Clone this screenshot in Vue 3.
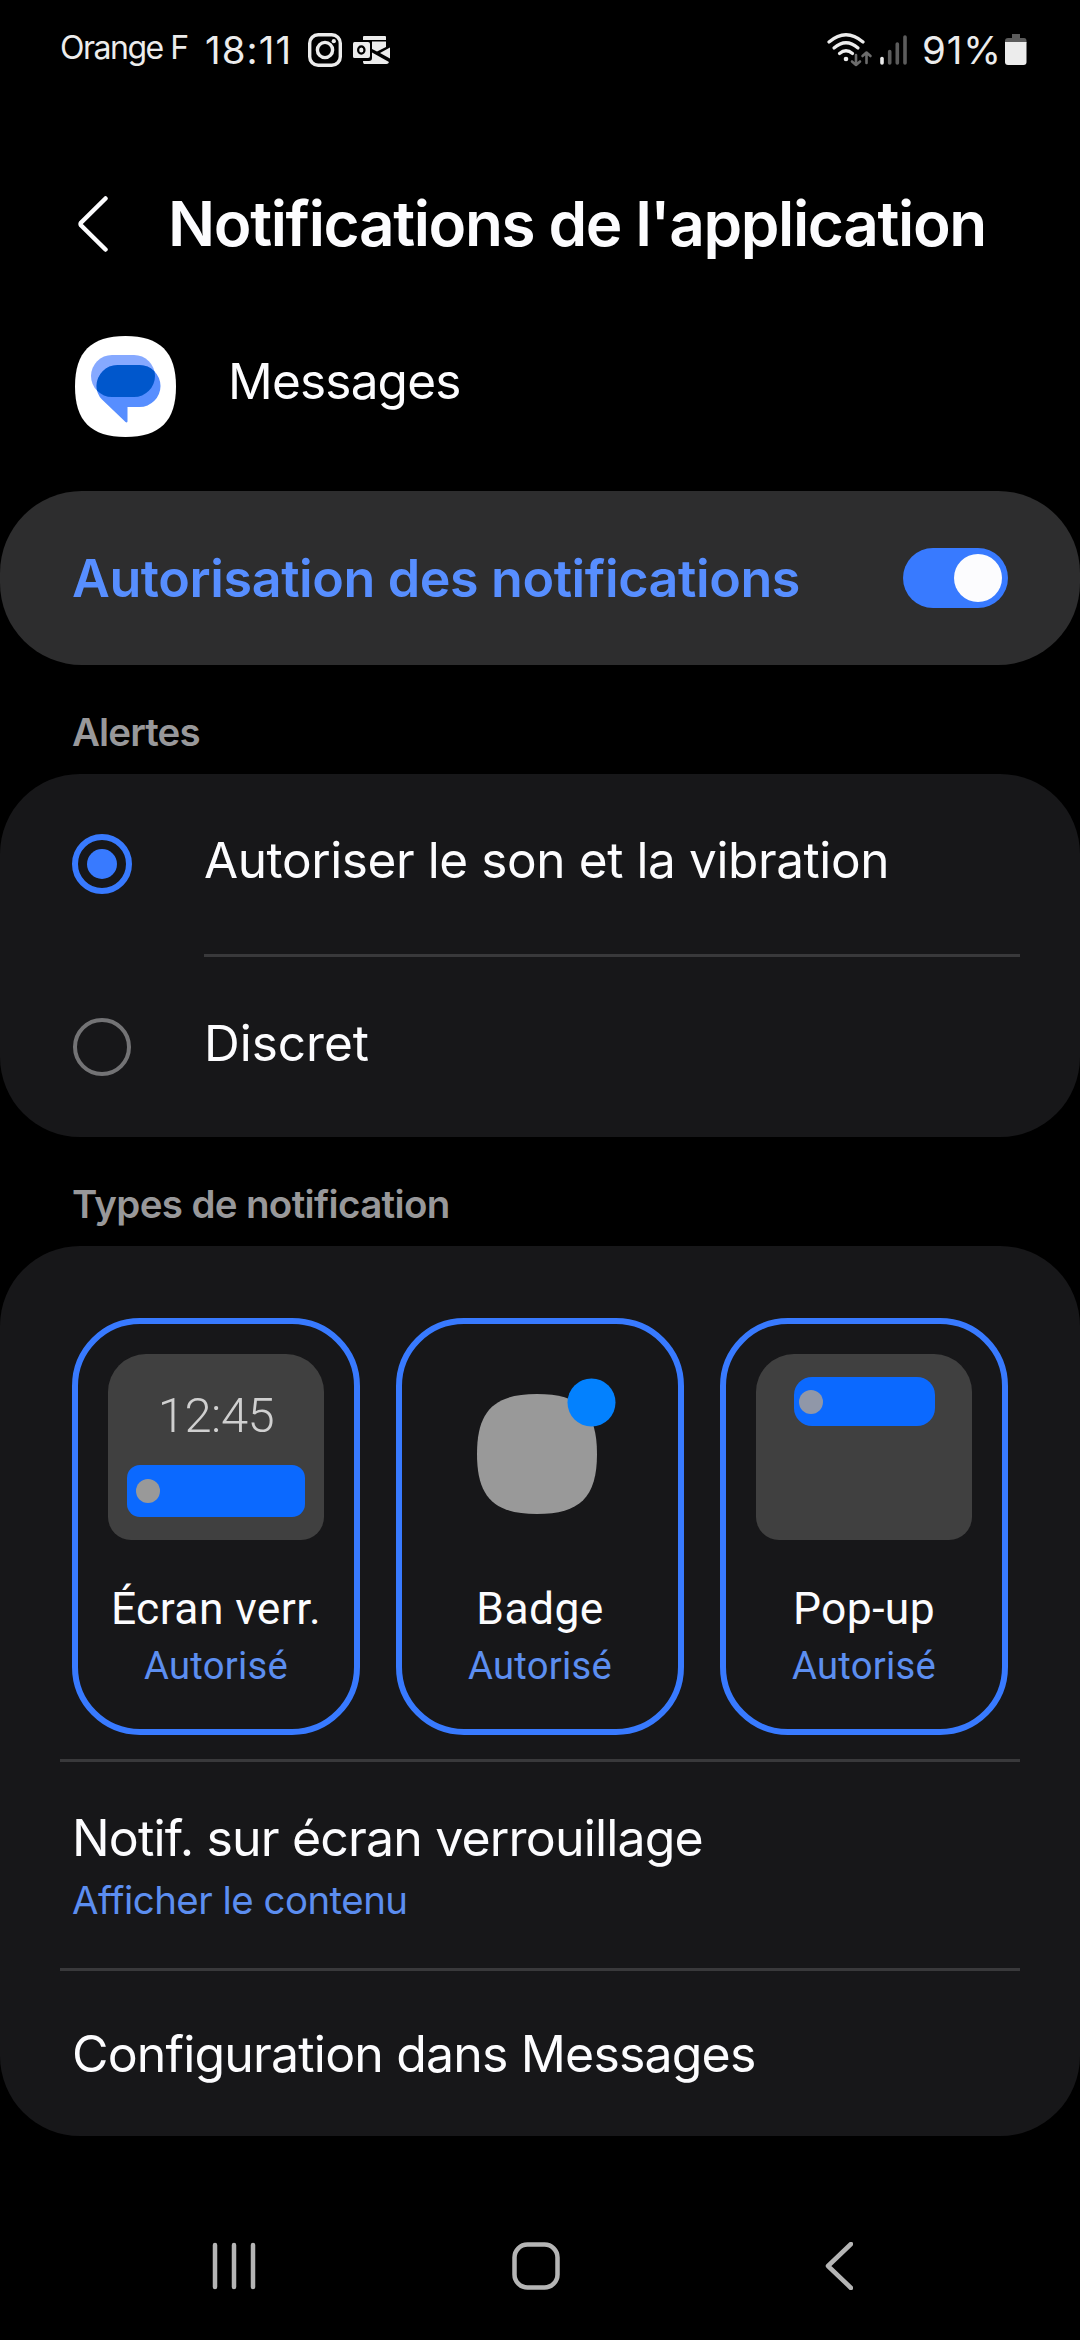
<script setup>
import { ref } from 'vue'

const enabled = ref(true)
const alertMode = ref('sound')

const alertModes = [
  { id: 'sound', label: 'Autoriser le son et la vibration' },
  { id: 'silent', label: 'Discret' }
]

const types = [
  { id: 'lock', label: 'Écran verr.', state: 'Autorisé' },
  { id: 'badge', label: 'Badge', state: 'Autorisé' },
  { id: 'popup', label: 'Pop-up', state: 'Autorisé' }
]
</script>

<template>
  <div class="screen">
    <header class="status-bar">
      <span class="carrier">Orange F</span>
      <span class="clock">18:11</span>
      <svg class="instagram" viewBox="0 0 34 34" aria-hidden="true">
        <rect x="1.7" y="1.7" width="30.6" height="30.6" rx="8.5" />
        <circle cx="17" cy="17" r="7.6" />
        <circle class="fill" cx="25.8" cy="8.2" r="2.1" />
      </svg>
      <svg class="outlook" viewBox="0 0 38 28" aria-hidden="true">
        <path d="M11 0H32Q33 0 33 1V4H10V1Q10 0 11 0Z" />
        <path d="M19 5.500H33V11L24 15.500L19 13Z" />
        <path d="M37 11.500V22.500L27 17Z" />
        <path d="M19 16.500L36 26Q35.500 28 33.500 28H11Q10 28 10 25H16Q19 25 19 22Z" />
        <path d="M1.500 6H15Q17 6 17 8V20Q17 22 15 22H1.500Q0 22 0 20.500V7.500Q0 6 1.500 6Z" />
        <ellipse class="ring" cx="8.3" cy="14" rx="3.200" ry="3.700" />
      </svg>
      <svg class="wifi" viewBox="0 0 46 34" aria-hidden="true">
        <path d="M2 9Q19 -5.500 36 9" />
        <path d="M7 15Q19 4.500 31 15" />
        <path d="M12.500 20.500Q19 15 25.500 20.500" />
        <circle cx="19" cy="26" r="2.300" />
        <path class="dim" d="M29 22V32M25 28.500L29 32L33 28.500M39.500 30V19.500M35.500 23L39.500 19.500L43.500 23" />
      </svg>
      <svg class="signal" viewBox="0 0 28 30" aria-hidden="true">
        <path class="on" d="M2 23.500V28" />
        <path d="M9.700 16.500V28M17.300 9V28M25 2V28" />
      </svg>
      <span class="percent">91%</span>
      <svg class="battery" viewBox="0 0 22 32" aria-hidden="true">
        <path class="cap" d="M7 0H15V4H19Q21.500 4 21.500 7V9H0V7Q0 4 3 4H7Z" />
        <path d="M0 8H21.500V28Q21.500 31 18.500 31H3Q0 31 0 28Z" />
      </svg>
    </header>

    <div class="title-bar">
      <svg class="back" viewBox="0 0 30 56" aria-hidden="true">
        <path d="M27.500 2.500L3.200 26.500Q2 28 3.200 29.500L27.500 53.500" />
      </svg>
      <h1>Notifications de l'application</h1>
    </div>

    <div class="app-row">
      <svg class="app-icon" viewBox="0 0 101 101" aria-hidden="true">
        <defs>
          <clipPath id="rear">
            <rect x="16" y="19" width="64" height="42" rx="21" />
          </clipPath>
        </defs>
        <path class="plate" d="M50.500 0C85 0 101 16 101 50.500S85 101 50.500 101S0 85 0 50.500S16 0 50.500 0Z" />
        <rect class="rear" x="16" y="19" width="64" height="42" rx="21" />
        <path class="front" d="M42.500 29H64.500A21 21 0 0 1 64.500 71H52.500V85.500Q52 87 50.500 86L27 63.500Q21.500 58 21.500 50A21 21 0 0 1 42.500 29Z" />
        <path class="overlap" clip-path="url(#rear)" d="M42.500 29H64.500A21 21 0 0 1 64.500 71H52.500V85.500Q52 87 50.500 86L27 63.500Q21.500 58 21.500 50A21 21 0 0 1 42.500 29Z" />
      </svg>
      <span class="app-name">Messages</span>
    </div>

    <button class="permission" role="switch" :aria-checked="enabled" @click="enabled = !enabled">
      <span class="permission-label">Autorisation des notifications</span>
      <span class="toggle" :class="{ on: enabled }"><i></i></span>
    </button>

    <h2 class="alerts-heading">Alertes</h2>
    <section class="card" role="radiogroup">
      <div
        v-for="mode in alertModes"
        :key="mode.id"
        class="alert-row"
        role="radio"
        :aria-checked="alertMode === mode.id"
        @click="alertMode = mode.id"
      >
        <span class="radio" :class="{ checked: alertMode === mode.id }"></span>
        <span class="alert-label" :class="mode.id">{{ mode.label }}</span>
      </div>
    </section>

    <h2 class="types-heading">Types de notification</h2>
    <section class="card">
      <div class="tiles">
        <div v-for="type in types" :key="type.id" class="tile">
          <div class="preview" :class="type.id">
            <span v-if="type.id === 'lock'" class="preview-clock">12:45</span>
            <svg v-if="type.id === 'badge'" viewBox="0 0 144 138" aria-hidden="true">
              <path d="M63 17C106 17 123 34 123 77S106 137 63 137S3 120 3 77S20 17 63 17Z" />
              <circle cx="117.500" cy="25.500" r="24" />
            </svg>
            <span v-else class="banner"><i></i></span>
          </div>
          <span class="tile-label">{{ type.label }}</span>
          <span class="tile-state">{{ type.state }}</span>
        </div>
      </div>
      <div class="link-row two-lines">
        <span class="link-title">Notif. sur écran verrouillage</span>
        <span class="link-sub">Afficher le contenu</span>
      </div>
      <div class="link-row">
        <span class="link-title">Configuration dans Messages</span>
      </div>
    </section>

    <nav class="nav-bar">
      <svg class="recents" viewBox="0 0 44 48" aria-hidden="true">
        <path d="M3 3V45M22 3V45M41 3V45" />
      </svg>
      <svg class="home" viewBox="0 0 48 48" aria-hidden="true">
        <rect x="2.500" y="2.500" width="43" height="43" rx="13" />
      </svg>
      <svg class="nav-back" viewBox="0 0 28 48" aria-hidden="true">
        <path d="M26 2L3 24L26 46" />
      </svg>
    </nav>
  </div>
</template>

<style>
body {
  background: #000;
}
</style>

<style scoped>
.screen {
  width: 1080px;
  height: 2340px;
  display: flex;
  flex-direction: column;
  color: #fcfcfe;
  background: #000;
  font-family: Inter, Roboto, sans-serif;
  overflow: hidden;
}

svg {
  display: block;
  flex: none;
  fill: none;
  stroke-linecap: round;
  stroke-linejoin: round;
}

h1,
h2 {
  margin: 0;
  font-weight: 600;
  white-space: nowrap;
}

.status-bar {
  height: 100px;
  padding: 0 53px 0 60px;
  display: flex;
  align-items: center;
  color: #ececec;
  font-size: 38.4px;
  line-height: 100px;
  white-space: nowrap;
}

.carrier {
  width: 145px;
  align-self: flex-start;
  font-size: 32px;
  line-height: 95px;
  letter-spacing: -1.5px;
}

.clock {
  width: 103px;
  letter-spacing: 1.1px;
}

.instagram {
  width: 34px;
  height: 34px;
  stroke: #ececec;
  stroke-width: 3.4;
}

.instagram .fill {
  fill: #ececec;
  stroke: none;
}

.outlook {
  width: 38px;
  height: 28px;
  margin-left: 11px;
  fill: #ececec;
}

.outlook .ring {
  fill: none;
  stroke: #000;
  stroke-width: 2.2;
}

.wifi {
  width: 46px;
  height: 34px;
  margin-left: auto;
  stroke: #ececec;
  stroke-width: 3.2;
}

.wifi circle {
  fill: #ececec;
  stroke: none;
}

.wifi .dim {
  stroke: #6c6c6c;
  stroke-width: 2.6;
}

.signal {
  width: 28px;
  height: 30px;
  margin-left: 7px;
  stroke: #5c5c5c;
  stroke-width: 3.6;
}

.signal .on {
  stroke: #ececec;
}

.percent {
  width: 83px;
  margin-left: 14px;
  letter-spacing: 0.9px;
}

.battery {
  width: 22px;
  height: 32px;
  fill: #ececec;
}

.battery .cap {
  fill: #5c5c5c;
}

.title-bar {
  height: 236px;
  padding: 12px 0 0 78px;
  display: flex;
  align-items: center;
  box-sizing: border-box;
}

.back {
  width: 30px;
  height: 56px;
  stroke: #fcfcfe;
  stroke-width: 4.5;
}

.title-bar h1 {
  margin-left: 60px;
  font-size: 62px;
  line-height: 80px;
  letter-spacing: -1.35px;
}

.app-row {
  height: 101px;
  padding: 0 75px;
  display: flex;
  align-items: center;
}

.app-icon {
  width: 101px;
  height: 101px;
}

.plate {
  fill: #fff;
}

.rear {
  fill: #86a9ff;
}

.front {
  fill: #578eff;
}

.overlap {
  fill: #0057cc;
}

.app-name {
  margin-left: 52px;
  padding-bottom: 11px;
  font-size: 49.5px;
  line-height: 60px;
  letter-spacing: -0.8px;
}

.permission {
  height: 174px;
  margin: 54px 0 0;
  padding: 0 72px;
  display: flex;
  align-items: center;
  justify-content: space-between;
  border: 0;
  border-radius: 82px;
  color: #578eff;
  background: #2d2d2e;
  font-family: inherit;
  font-size: 52px;
  font-weight: 600;
  line-height: 64px;
  letter-spacing: -0.4px;
  text-align: left;
  white-space: nowrap;
}

.permission-label {
  padding-top: 2px;
}

.toggle {
  width: 105px;
  height: 60px;
  padding: 6px;
  display: flex;
  align-items: center;
  box-sizing: border-box;
  border-radius: 30px;
  background: #5a5a5c;
}

.toggle.on {
  justify-content: flex-end;
  background: #387aff;
}

.toggle i {
  width: 48px;
  height: 48px;
  border-radius: 50%;
  background: #fcfcfe;
}

h2 {
  padding-left: 72px;
  color: #98989a;
  font-size: 38.5px;
  line-height: 50px;
}

.alerts-heading {
  margin: 42px 0 17px;
  letter-spacing: -0.9px;
}

.types-heading {
  margin: 42px 0 17px;
  letter-spacing: -0.65px;
}

.card {
  flex: none;
  border-radius: 80px;
  background: #171719;
}

.alert-row {
  position: relative;
  height: 180px;
  padding-left: 72px;
  display: grid;
  grid-template-columns: 132px 1fr;
  align-items: center;
}

.alert-row + .alert-row {
  margin-top: 3px;
}

.alert-row + .alert-row::before {
  content: "";
  position: absolute;
  top: -3px;
  left: 204px;
  right: 60px;
  height: 3px;
  background: #39393b;
}

.radio {
  width: 58px;
  height: 58px;
  margin-left: 1px;
  display: grid;
  place-items: center;
  box-sizing: border-box;
  border: 4px solid #737375;
  border-radius: 50%;
}

.radio.checked {
  width: 60px;
  height: 60px;
  margin-left: 0;
  border: 6px solid #387aff;
}

.radio.checked::after {
  content: "";
  width: 30px;
  height: 30px;
  border-radius: 50%;
  background: #387aff;
}

.alert-label {
  padding-bottom: 8px;
  font-size: 49.5px;
  line-height: 60px;
  letter-spacing: -0.4px;
}

.alert-label.silent {
  letter-spacing: 0;
}

.tiles {
  padding: 72px 72px 24px;
  display: grid;
  grid-template-columns: repeat(3, 288px);
  gap: 36px;
}

.tile {
  height: 417px;
  padding-top: 30px;
  display: flex;
  flex-direction: column;
  align-items: center;
  box-sizing: border-box;
  border: 6px solid #387aff;
  border-radius: 68px;
  font-family: Roboto, sans-serif;
}

.preview {
  width: 216px;
  height: 186px;
  display: flex;
  flex-direction: column;
  align-items: center;
  border-radius: 38px 38px 23px 23px;
  background: #404040;
}

.preview.badge {
  background: none;
}

.preview svg {
  width: 144px;
  height: 138px;
  margin: 23px 0 0 12px;
}

.preview path {
  fill: #999;
}

.preview circle {
  fill: #0381fe;
}

.preview-clock {
  margin: 32px 0 19px;
  color: #d0d0d0;
  font-size: 49px;
  font-weight: 300;
  line-height: 60px;
  letter-spacing: -0.5px;
}

.banner {
  width: 178px;
  height: 52px;
  padding-left: 9px;
  display: flex;
  align-items: center;
  box-sizing: border-box;
  border-radius: 13px;
  background: #0b69ff;
}

.banner i {
  width: 24px;
  height: 24px;
  border-radius: 50%;
  background: #999;
}

.popup .banner {
  width: 141px;
  height: 49px;
  margin-top: 23px;
  padding-left: 5px;
  border-radius: 18px;
}

.popup .banner i {
  background: #9097a8;
}

.tile-label {
  margin-top: 41px;
  font-size: 44.4px;
  line-height: 56px;
  letter-spacing: 0.4px;
}

.tile-state {
  margin-top: 6px;
  color: #5c8ef0;
  font-size: 38.2px;
  line-height: 46px;
  letter-spacing: 0.3px;
}

.link-row {
  position: relative;
  height: 165px;
  margin-top: 3px;
  padding: 0 72px;
  display: flex;
  flex-direction: column;
  justify-content: center;
}

.link-row::before {
  content: "";
  position: absolute;
  top: -3px;
  left: 60px;
  right: 60px;
  height: 3px;
  background: #39393b;
}

.link-row.two-lines {
  height: 206px;
  box-sizing: border-box;
}

.link-title {
  font-size: 50px;
  line-height: 64px;
  letter-spacing: -0.83px;
}

.link-sub {
  margin-top: 5px;
  color: #5c8ef0;
  font-size: 38.4px;
  line-height: 50px;
  letter-spacing: -0.5px;
}

.nav-bar {
  flex: none;
  height: 48px;
  margin-top: 106px;
  padding-left: 212px;
  display: flex;
  align-items: center;
}

.nav-bar svg {
  height: 48px;
  stroke: #b5b5b5;
  stroke-width: 4.5;
}

.recents {
  width: 44px;
}

.home {
  width: 48px;
  margin-left: 256px;
}

.nav-back {
  width: 28px;
  margin-left: 265px;
}
</style>
